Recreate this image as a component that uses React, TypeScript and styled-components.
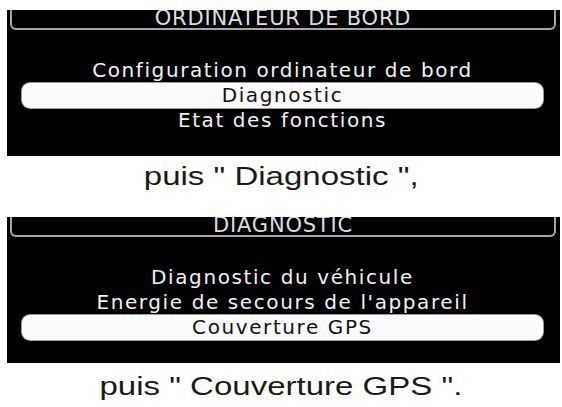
import React from "react";
import styled, { createGlobalStyle } from "styled-components";

const GlobalStyle = createGlobalStyle`
  html, body {
    margin: 0;
    padding: 0;
    background: #ffffff;
  }
`;

type Screen = {
  title: string;
  items: string[];
  selected: number;
  caption: string;
  captionTop: number;
};

const screens: Screen[] = [
  {
    title: "ORDINATEUR DE BORD",
    items: ["Configuration ordinateur de bord", "Diagnostic", "Etat des fonctions"],
    selected: 1,
    caption: 'puis " Diagnostic ",',
    captionTop: 5,
  },
  {
    title: "DIAGNOSTIC",
    items: [
      "Diagnostic du véhicule",
      "Energie de secours de l'appareil",
      "Couverture GPS",
    ],
    selected: 2,
    caption: 'puis " Couverture GPS ".',
    captionTop: 8,
  },
];

export default function App() {
  return (
    <>
      <GlobalStyle />
      <Page>
        {screens.map((screen) => (
          <Step key={screen.title}>
            <Display>
              <TitleFrame>
                <Title>{screen.title}</Title>
              </TitleFrame>
              <Menu>
                {screen.items.map((item, i) => (
                  <MenuRow key={item} $active={i === screen.selected}>
                    {item}
                  </MenuRow>
                ))}
              </Menu>
            </Display>
            <Caption $top={screen.captionTop}>
              <CaptionText>{screen.caption}</CaptionText>
            </Caption>
          </Step>
        ))}
      </Page>
    </>
  );
}

const Page = styled.div`
  width: 562px;
  height: 407px;
  padding-top: 10px;
  box-sizing: border-box;
  overflow: hidden;
  display: flex;
  flex-direction: column;
`;

const Step = styled.section`
  display: flex;
  flex-direction: column;
`;

const Display = styled.div`
  margin-left: 7px;
  width: 553px;
  background: #000000;
  padding-bottom: 23px;
`;

const TitleFrame = styled.div`
  height: 20px;
  margin: 0 4px 0 3px;
  box-sizing: border-box;
  border: 2px solid #a6a6a6;
  border-top: none;
  border-radius: 0 0 6px 6px;
  overflow: hidden;
  display: flex;
  justify-content: center;
  align-items: flex-start;
`;

const Title = styled.span`
  margin-top: -3px;
  font-family: "DejaVu Sans", sans-serif;
  font-size: 21px;
  line-height: 22px;
  letter-spacing: 0.8px;
  color: #dedede;
  white-space: nowrap;
`;

const Menu = styled.div`
  padding-top: 28px;
  display: flex;
  flex-direction: column;
`;

const MenuRow = styled.div<{ $active: boolean }>`
  height: 25px;
  margin: 0 17px 0 15px;
  border-radius: 8px;
  text-align: center;
  font-family: "DejaVu Sans", sans-serif;
  font-size: 20px;
  line-height: 25px;
  letter-spacing: 1.6px;
  white-space: nowrap;
  color: ${(p) => (p.$active ? "#111111" : "#f2f2f2")};
  background: ${(p) => (p.$active ? "#fbfbfb" : "transparent")};
  box-shadow: ${(p) => (p.$active ? "0 0 0 1px #9a9a9a" : "none")};
`;

const Caption = styled.div<{ $top: number }>`
  padding: ${(p) => p.$top}px 0 26px;
  display: flex;
  justify-content: center;
`;

const CaptionText = styled.span`
  display: inline-block;
  font-family: "Liberation Sans", Arial, sans-serif;
  font-size: 26px;
  line-height: 30px;
  color: #1a1a1a;
  white-space: pre;
  transform: scaleX(1.27);
`;
